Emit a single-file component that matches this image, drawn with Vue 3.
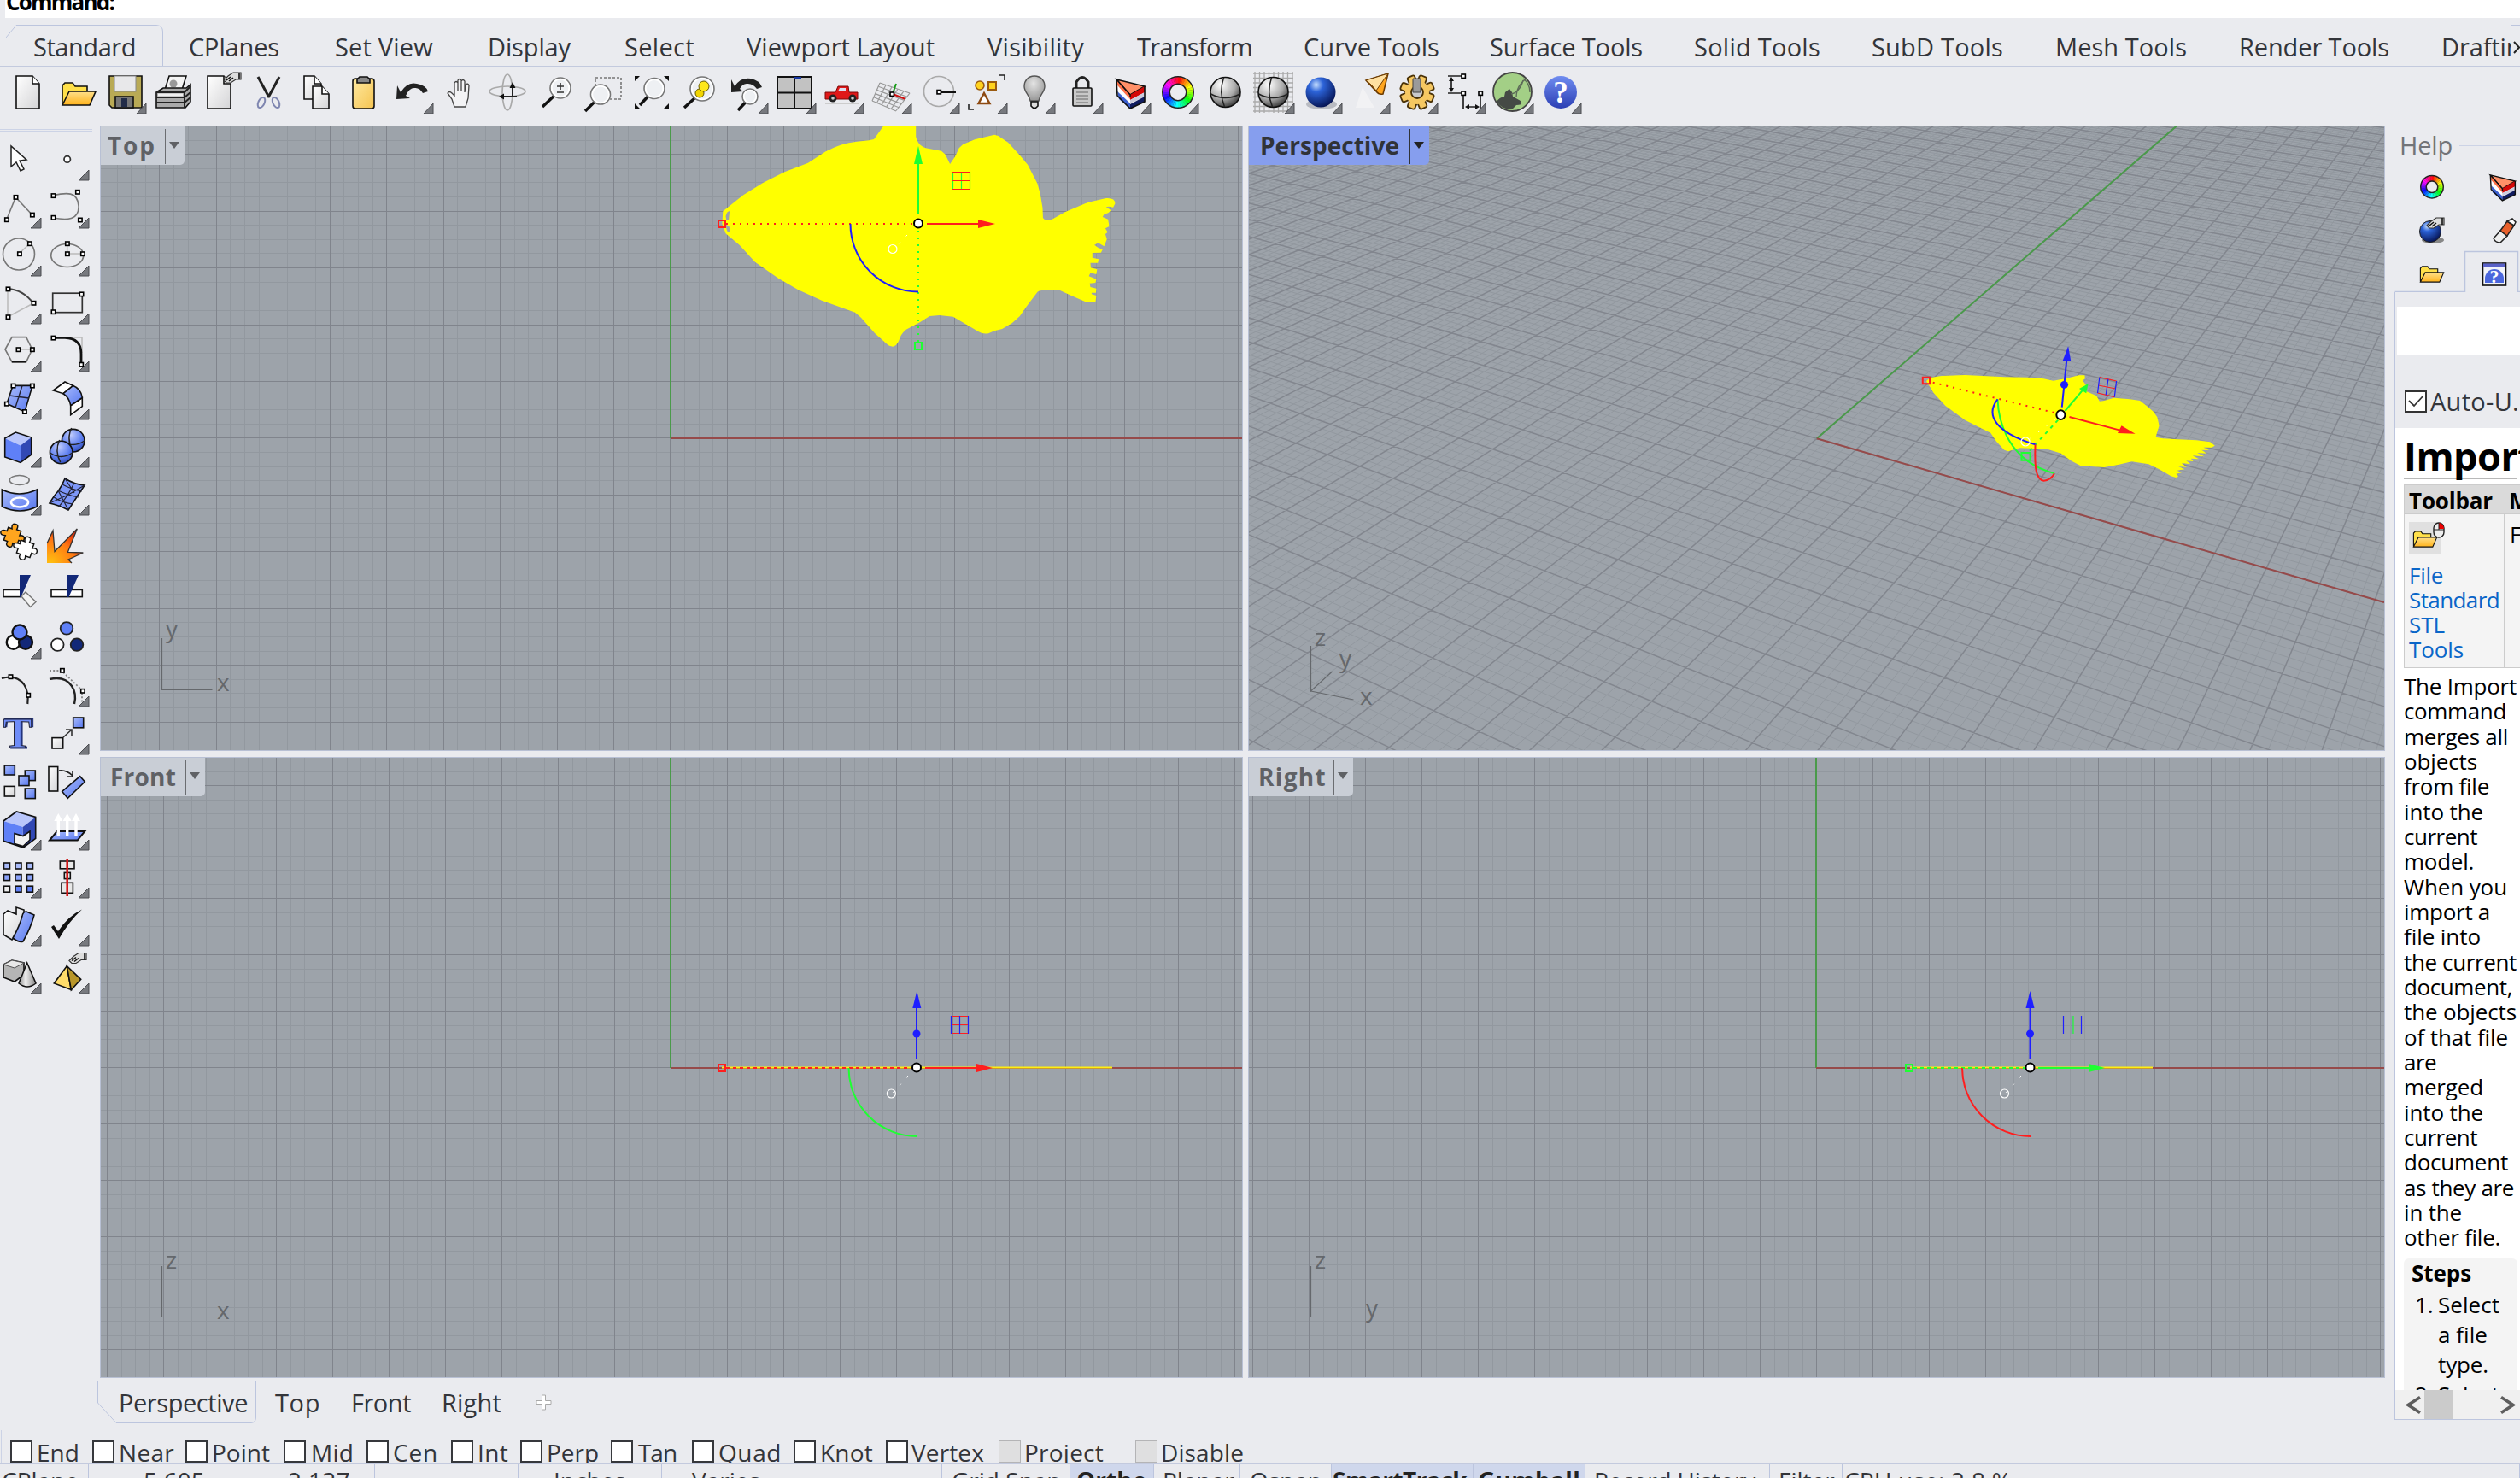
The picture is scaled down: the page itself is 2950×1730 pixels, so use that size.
<script setup>
// Sets tracking so a label occupies the given width in pixels.
const vFit = {
  mounted(el, { value }) {
    if (!value) return
    const w = el.getBoundingClientRect().width
    el.style.letterSpacing = (value + 3 - w) / [...el.textContent].length + 'px'
  },
}

const K = 'stroke="#111" stroke-width="1.6"'
const sq = (x, y) => `<rect x="${x - 2}" y="${y - 2}" width="4.4" height="4.4" fill="#fff" stroke="#000" stroke-width="1.6"/>`
const box = (x, y, w, h, f = 'url(#blu)') => `<rect x="${x}" y="${y}" width="${w}" height="${h}" fill="${f}" ${K}/>`
const ring = (cx, cy, r, sw) => {
  let s = `<circle cx="${cx}" cy="${cy}" r="${r}" fill="none" stroke="#222" stroke-width="${sw + 3}"/>`
  for (let i = 0; i < 36; i++) {
    const a = (i * 10 * Math.PI) / 180
    const b = ((i * 10 + 11) * Math.PI) / 180
    s += `<path d="M${cx + r * Math.sin(a)} ${cy - r * Math.cos(a)}A${r} ${r} 0 0 1 ${cx + r * Math.sin(b)} ${cy - r * Math.cos(b)}" fill="none" stroke="hsl(${i * 10} 100% 52%)" stroke-width="${sw}"/>`
  }
  return s
}
const lens = (x, y, r, hx, hy) =>
  `<path d="M${x - r * 0.6} ${y + r * 0.75}L${hx} ${hy}" stroke="#111" stroke-width="3.4"/><circle cx="${x}" cy="${y}" r="${r}" fill="#eef0f3" stroke="#777" stroke-width="1.6"/><circle cx="${x}" cy="${y}" r="${r - 1.8}" fill="none" stroke="#fff" stroke-width="1.6"/>`
const hand = (x, y) =>
  `<path d="M${x} ${y + 9}l5-5 6-4h9v8h-6l-6 4h-5z" fill="#ddd" stroke="#333" stroke-width="1.2"/><path d="M${x + 18} ${y}v8M${x + 3} ${y + 9}l5-4M${x + 6} ${y + 10}l5-4" stroke="#111" stroke-width="1.6"/>`
const page = (x, y, w, h) =>
  `<path d="M${x} ${y}h${w - 8}l8 9v${h - 9}h${-w}z" fill="url(#wht)" ${K}/><path d="M${x + w - 8} ${y}v9h8" fill="#fff" ${K}/>`
const folder = `<path d="M12 42V20l3-3h9l3 4h14v6" fill="#ffe04a" ${K}/><path d="M12 43l8-16h31l-7 16z" fill="url(#gld)" ${K}/>`
const wedge = `<path d="M14 13l33 8-17 10z" fill="#ff9068" ${K}/><path d="M14 13l16 18v5L15 20z" fill="#ff7048"/><path d="M47 21L30 31v6l17-9z" fill="#d40808"/><path d="M15 20l15 17v4L15 26z" fill="#fff"/><path d="M47 28L30 37v4l17-8z" fill="#ccd"/><path d="M15 27l15 14v6L17 36z" fill="#3a5fd0"/><path d="M47 33L30 42v5l17-8z" fill="#101c60"/><path d="M14 13l1 19 15 15 17-8V21M14 13l16 18v3" fill="none" ${K}/>`
const ballLines = (x, y, r) => `<path d="M${x - r} ${y + 2}Q${x} ${y + 11} ${x + r} ${y + 2}M${x - 2} ${y - r}Q${x - 8} ${y} ${x - 1} ${y + r}" fill="none" stroke="#222" stroke-width="1.5"/>`
const sphere = `<circle cx="29.500" cy="28" r="17.500" fill="url(#gry)" ${K}/>` + ballLines(29.5, 28, 17)
const gear = () => {
  let s = ''
  for (let i = 0; i < 8; i++) s += `<rect x="25.500" y="8" width="9" height="12" rx="2" fill="#f6c862" stroke="#4a3208" stroke-width="1.8" transform="rotate(${i * 45 + 22} 30 28)"/>`
  return s + `<circle cx="30" cy="28" r="14" fill="#f6c862"/><circle cx="30" cy="28" r="7" fill="#c9c9cb" stroke="#4a3208" stroke-width="1.8"/><path d="M25 12h9v16h-9z" fill="#9a9a9a" stroke="#444"/>`
}
const fineGrid = () => {
  let s = ''
  for (let i = 0; i < 9; i++) s += `<path d="M${8 + i * 5.5} 4v48M6 ${6 + i * 5.5}h47" stroke="#aaa" stroke-width="1.3"/>`
  return s
}
const tiltGrid = () => {
  let s = ''
  for (let i = 0; i <= 5; i++) s += `<path d="M${17 + i * 7} ${17 + i * 2.4}L${8 + i * 5.6} ${38 + i * 2.3}M${17 - i * 1.8} ${17 + i * 4.2}L${52 - i * 3.2} ${29 + i * 4.2}" stroke="#999" stroke-width="1.2"/>`
  return s
}

const topIcons = [
  [page(14, 9, 27, 38)],
  [folder],
  [`<path d="M11 9h38v37H14l-3-3z" fill="#b9aa55" ${K}/><rect x="17" y="9" width="25" height="18" fill="#e8e8ea" stroke="#888"/><rect x="18" y="33" width="21" height="13" fill="#777" ${K}/><rect x="25" y="35" width="7" height="10" fill="#222c48"/>`, 1],
  [`<path d="M20 25l5-16h20l-5 16z" fill="#f4f4f4" ${K}/><circle cx="30" cy="18" r="4.500" fill="#999"/><path d="M10 28l8-5h27l5-4v20l-6 7H10z" fill="#aaa" ${K}/><path d="M10 28h33l7-7M10 34h33l7-6M10 40h33l7-6M43 28v18" fill="none" stroke="#222" stroke-width="2"/><path d="M12 31h29" stroke="#eee" stroke-width="3"/>`],
  [page(14, 9, 27, 38) + hand(33, 5)],
  [`<path d="M17 10l13 24M42 10L29 34" stroke="#222" stroke-width="3"/><ellipse cx="21" cy="40" rx="3.600" ry="6.500" fill="none" stroke="#7f86b0" stroke-width="2" transform="rotate(25 21 40)"/><ellipse cx="38" cy="40" rx="3.600" ry="6.500" fill="none" stroke="#7f86b0" stroke-width="2" transform="rotate(-25 38 40)"/>`],
  [page(15, 9, 20, 27) + page(25, 21, 19, 26)],
  [`<rect x="16" y="12" width="25" height="35" rx="3" fill="url(#pst)" ${K}/><path d="M21 17v-4l3-3h9l3 3v4z" fill="#888" ${K}/>`],
  [`<path d="M16 28Q24 15 35 18Q46 20 48 27L42 29Q38 22 32 23Q26 23 22 32l5 3L11 36l1-16z" fill="#222"/>`, 1],
  [`<path d="M23 45l-3-9-5-7q2-3 5 0l3 3V17q2-3 4 0v10V14q2-3 4 0v13V15q2-3 4 0v13l1-9q3-2 4 1l-1 15-3 10z" fill="#f3f3f5" stroke="#444" stroke-width="1.3"/>`],
  [`<ellipse cx="29" cy="28" rx="6" ry="21" fill="none" stroke="#aaa" stroke-width="1.700"/><ellipse cx="29" cy="27" rx="21" ry="6" fill="none" stroke="#aaa" stroke-width="1.700"/><path d="M35 20v12M22 33h18" stroke="#222" stroke-width="2"/><path d="M35 16l3.500 7h-7zM19 33l6-3.500v7z" fill="#111"/>`],
  [lens(35, 23, 12, 14, 45) + `<path d="M31 21h8M35 17v8M31 28h8" stroke="#333" stroke-width="1.6"/>`],
  [`<rect x="20" y="11" width="30" height="25" fill="none" stroke="#777" stroke-width="1.600" stroke-dasharray="3 2"/>` + lens(26, 30.5, 11.5, 8, 50)],
  [lens(33, 23.5, 12, 16, 43) + `<path d="M10 9h6l-6 6zM50 9v6l-6-6zM10 47v-6l6 6zM50 47h-6l6-6z" fill="#111"/>`],
  [lens(33, 24, 14, 12, 46) + `<circle cx="30" cy="29" r="5" fill="#f2d500" stroke="#665a00"/><circle cx="35" cy="21" r="6" fill="#ffe81a" stroke="#665a00"/>`],
  [lens(33, 33, 9, 19, 49) + `<path d="M15 21Q22 10 34 12Q44 14 47 22l-6 2Q36 17 29 18Q24 18 21 24l4 3-14 1 0-15z" fill="#222"/>`, 1],
  [`<path d="M9 10h40v37H9zM29 10v37M9 28.500h40" fill="#c2c2c2" stroke="#111" stroke-width="2"/><path d="M29 11h8" stroke="#1838a0" stroke-width="2"/>`, 1],
  [`<path d="M9 41h40" stroke="#ccc" stroke-width="2"/><path d="M9 36v-8h12l3-7h12l1 7h10v8z" fill="#e01818" stroke="#7a0808"/><path d="M24 27l2-4h7v4z" fill="#dde"/><circle cx="18" cy="35" r="4.500" fill="#222"/><circle cx="41" cy="35" r="4.500" fill="#222"/><circle cx="18" cy="35" r="1.800" fill="#ccc"/><circle cx="41" cy="35" r="1.800" fill="#ccc"/>`, 1],
  [tiltGrid() + `<path d="M32 30l4-12" stroke="#1a9c1a" stroke-width="2"/><path d="M32 30l15 6" stroke="#d01010" stroke-width="2"/>` + sq(31, 30), 1],
  [`<circle cx="30" cy="27" r="17.500" fill="none" stroke="#aaa" stroke-width="1.600"/><path d="M31 28h19" stroke="#111" stroke-width="2"/>` + sq(30, 27.5), 1],
  [`<circle cx="22" cy="20" r="5" fill="#ffd21e" stroke="#9a5b10" stroke-width="1.6"/><rect x="32" y="16" width="9" height="9" fill="#ffd21e" stroke="#9a5b10" stroke-width="2"/><path d="M27 29l6.500 12h-13z" fill="#fff" stroke="#8d4a12" stroke-width="2.4"/><path d="M44 8h7v6M9 42v6h6" fill="none" stroke="#222" stroke-width="1.6"/>`, 1],
  [`<path d="M30 9c8 0 12 6 12 12 0 7-6 10-7 17h-10c-1-7-7-10-7-17 0-6 4-12 12-12z" fill="url(#gry2)" stroke="#555" stroke-width="1.4"/><path d="M26 39h8v5q-4 5-8 0z" fill="#ddd" ${K}/>`, 1],
  [`<path d="M23 23v-7q7-11 14 0v7" fill="none" stroke="#222" stroke-width="3"/><rect x="19" y="23" width="22" height="21" rx="1" fill="#c8c8c8" ${K}/><path d="M23 28h14M23 32h14M23 36h14M23 40h14" stroke="#888" stroke-width="1.5"/>`, 1],
  [wedge, 1],
  [ring(30, 28, 14, 7), 1],
  [sphere],
  [fineGrid() + sphere, 1],
  [`<ellipse cx="30" cy="42" rx="18" ry="6" fill="#b9bbc2"/><circle cx="29" cy="28" r="17.500" fill="url(#bal)"/>`, 1],
  [`<path d="M22 22l-8 24h22z" fill="#f2f2f4"/><path d="M26 14l26-8-6 24q-5 1-8-3z" fill="#ffa51e" stroke="#6b3a00" stroke-width="1.5"/><path d="M26 14l26-8-14 20q-6-8-12-12z" fill="#ffe0a0" stroke="#6b3a00" stroke-width="1"/>`, 1],
  [gear(), 1],
  [`<path d="M10 9h18M10 29h18M14 13v12M28 30v18M48 30v18M32 45h12" stroke="#222" stroke-width="1.7"/><path d="M14 10l3 5h-6zM14 28l3-5h-6zM30 45l5-3v6zM47 45l-5-3v6z" fill="#111"/>` + sq(28, 9) + sq(28, 29) + sq(48, 29), 1],
  [`<circle cx="29.500" cy="27.500" r="22.500" fill="#a3cf86" stroke="#444" stroke-width="1.800"/><path d="M11 39q3-5 9-6l1-5 5-4 3 4 1 5 9 5q4 5-5 5l-5 5q-12 0-18-9z" fill="#454a45"/><path d="M34 34q0-14 12-22M28 30q10-2 14-16M42 12q8 6 8 16" fill="none" stroke="#5c6a58" stroke-width="1.400"/>`, 1],
  [`<circle cx="30" cy="28" r="19" fill="url(#hlp)"/><text x="30" y="40" text-anchor="middle" font-family="Liberation Serif, serif" font-weight="700" font-size="35" fill="#fff">?</text>`, 1],
]

const gray = 'fill="none" stroke="#777" stroke-width="1.6"'
let dots = ''
for (let j = 0; j < 3; j++) for (let i = 0; i < 3; i++) dots += box(10.5 + i * 13.5, 12 + j * 13.6, 7, 7, j === 2 && i === 0 ? '#eee' : ['#a9bbfb', '#8aa2fa', '#5f80f7'][j])
const puzzle = (x, y, f) => `<path transform="translate(${x} ${y}) rotate(20) scale(.92)" d="M-9-8h5q-3-6 2-7t4 6h6v6q6-3 7 2t-6 4v6h-6q2 6-3 6t-4-6h-5v-6q-6 2-7-2t7-4z" fill="${f}" ${K}/>`
const leftIcons = [
  [`<path d="M19 13v24l6-5 5 10 4-2-5-10 8-1z" fill="#fff" stroke="#222" stroke-width="1.5"/>`],
  [`<circle cx="28.700" cy="28.400" r="3.700" fill="#fff" stroke="#333" stroke-width="1.800"/>`, 1],
  [`<path d="M13.700 43L24.300 17l19.400 20.500" ${gray}/>` + sq(13.7, 43) + sq(24.3, 16.7) + sq(43.7, 37.4), 1],
  [`<path d="M12 15C28 11 41 10 42 27S28 44 12 41" ${gray}/>` + sq(12.3, 14.9) + sq(40.7, 10.6) + sq(43.7, 43.3) + sq(12.3, 40.6), 1],
  [`<circle cx="28" cy="27.500" r="18.500" ${gray}/><path d="M28 27l13-12" stroke="#bbb" stroke-width="1.500"/>` + sq(28.7, 27) + sq(40.7, 15), 1],
  [`<ellipse cx="28.700" cy="29" rx="19" ry="13.500" ${gray}/><path d="M28.700 15v12h18" fill="none" stroke="#bbb" stroke-width="1.500"/>` + sq(28.7, 15) + sq(28.7, 27) + sq(46.7, 27), 1],
  [`<path d="M15 12v33l30-16" fill="none" stroke="#bbb" stroke-width="1.500"/><path d="M15 12q18 1 30 17" fill="none" stroke="#444" stroke-width="1.800"/>` + sq(15.3, 12.2) + sq(45.3, 28.6) + sq(15.3, 45), 1],
  [`<rect x="11.700" y="17.200" width="34.600" height="22.500" fill="none" stroke="#333" stroke-width="1.700"/>` + sq(45.3, 18.2) + sq(12.3, 39), 1],
  [`<path d="M12 27l8-14.400h16.700L43.700 27l-7 14.600H20z" ${gray}/><path d="M20 41.600h16.700" stroke="#111" stroke-width="1.800"/><path d="M27 27h16" stroke="#bbb" stroke-width="1.500"/>` + sq(27.3, 27) + sq(43.7, 27), 1],
  [`<path d="M28 13h18v18" fill="none" stroke="#bbb" stroke-width="1.500"/><path d="M12 13.400h14Q45 14 45 32v12" fill="none" stroke="#111" stroke-width="2.800"/>` + sq(12.3, 13.4) + sq(45, 44.5), 1],
  [`<path d="M21 13.400h23L35 44l-21-9.500z" fill="url(#blu)" ${K}/><path d="M32 13.500L24 39M17 25l23 3" fill="none" stroke="#223" stroke-width="1.400"/>` + sq(21.3, 13.4) + sq(43.7, 13.4) + sq(34.7, 43.8) + sq(13.7, 34.5), 1],
  [`<path d="M12.300 19L26 9l9.700 4.400L24 22.700zM46.300 27.700v10l-13.600 10V36.600z" fill="#fff" ${K}/><path d="M35.700 13.400Q45 17 46.300 27.500L32.700 36.600Q31 27 24 22.700z" fill="url(#blu)" ${K}/>`, 1],
  [`<path d="M11.700 19l12.600-7 18.400 6L30 27.400z" fill="#b9c6fb"/><path d="M11.700 19L30 27.400v20L11.700 41z" fill="#5f80f7"/><path d="M30 27.400L42.700 18v20L30 47.400z" fill="#3148b4"/><path d="M11.700 19l12.600-7 18.400 6v20L30 47.400 11.700 41z" fill="none" ${K}/>`, 1],
  [`<circle cx="35.700" cy="21.700" r="13.300" fill="url(#sph)" ${K}/>${ballLines(35.7, 20, 13)}<circle cx="21.700" cy="35.500" r="13.300" fill="url(#sph)" ${K}/>${ballLines(21.7, 34, 13)}`, 1],
  [`<ellipse cx="28.700" cy="12" rx="11.500" ry="5.500" ${gray}/><path d="M8.300 23q20 10 41 0v20q-20 10-41 0z" fill="url(#blu)" ${K}/><ellipse cx="29" cy="38" rx="10" ry="5.500" fill="none" stroke="#fff" stroke-width="2.600"/>`, 1],
  [`<path d="M26 10q11 7 23 8-8 12-19 29-12-6-22-8 6-10 10-14 5-7 8-15z" fill="#7d97f8" ${K}/><path d="M37 15Q30 30 19 43M42 32Q30 30 18 24M46 25q-12-2-23-8M36 40q-12-1-23-8M26 10l11 17M49 18L30 29 8 39M18 24l12 23" fill="none" stroke="#223" stroke-width="1.200"/>`, 1],
  [puzzle(21, 21, '#ffa51e') + puzzle(36, 36, '#fff')],
  [`<path d="M5 30l7-15 2 24.500L40.300 13 29.300 40.400l18 .6L30 49l4 4H5z" fill="url(#exp)"/><path d="M5 30l7-15 2 24.500L40.300 13 29.300 40.400l18 .6L30 49l4 4" fill="none" stroke="#333" stroke-width="1.300"/>`],
  [`<rect x="10" y="28.400" width="20" height="8.200" fill="#fff" ${K}/><path d="M29 11h13L30.500 37H29z" fill="#122878"/><path d="M31 36l5-5 12 11.500-6.500 6z" fill="#f4f4f4" stroke="#777" stroke-width="1.400"/>`],
  [`<rect x="10" y="28.400" width="36.300" height="8.200" fill="#fff" ${K}/><path d="M29 11h13L30.500 37H29z" fill="#122878"/>`],
  [`<g stroke="#111" stroke-width="2.400"><circle cx="21.700" cy="33.800" r="8" fill="#fff"/><circle cx="36" cy="33.800" r="8" fill="#122878"/><circle cx="29" cy="22" r="8.500" fill="#5f80f7"/></g>`, 1],
  [`<g stroke="#222" stroke-width="1.800"><circle cx="28" cy="17.400" r="7.300" fill="#5f80f7"/><circle cx="17.300" cy="36.600" r="7.300" fill="#fff"/><circle cx="40" cy="36.600" r="7.300" fill="#122878"/></g>`],
  [`<path d="M8 20Q25 15 34 27 40 36 38.300 50" fill="none" stroke="#222" stroke-width="2.200"/>` + sq(18.3, 18) + sq(39, 39.6)],
  [`<path d="M8 21Q26 17 34 29 40 38 37 50" fill="none" stroke="#222" stroke-width="2.400"/><path d="M8 11h14l24 23v16" fill="none" stroke="#888" stroke-width="1.800" stroke-dasharray="2 2.200"/>` + sq(22.7, 10.6) + sq(46.7, 34.6), 1],
  [`<text x="28" y="46" text-anchor="middle" font-family="Liberation Serif, serif" font-weight="700" font-size="52" fill="#24347c" stroke="#24347c">T</text><text x="26.500" y="45" text-anchor="middle" font-family="Liberation Serif, serif" font-weight="700" font-size="51" fill="#6e8cf8" stroke="#223" stroke-width="1">T</text>`],
  [box(11, 33.6, 12.7, 12.4, 'url(#wht)') + box(35.7, 10, 12, 11.8) + `<path d="M24 33l10-9M27 24h7v7" fill="none" stroke="#333" stroke-width="1.600"/>`, 1],
  [box(11.3, 10, 12, 11) + box(35.3, 16, 12, 11.6) + box(28, 22, 12, 11.6) + box(11.3, 34.4, 12, 11.6, 'url(#wht)') + box(35.3, 37, 12, 11.6)],
  [box(7, 11.5, 10.7, 28.5, 'url(#wht)') + `<path d="M19 16q9-1 16 6M35 16v7h-7" fill="none" stroke="#222" stroke-width="1.600"/><path d="M22.700 40.400l21-17.800 5.600 6.400-20 19.300z" fill="url(#blu)" ${K}/>`],
  [`<path d="M10 19L25.300 8l22.400 6.400-15 11.600z" fill="#b9c6fb"/><path d="M10 19l22.700 7v24L10 42.300z" fill="#5f80f7"/><path d="M32.700 26l15-11.600v25L33 50z" fill="#3148b4"/><path d="M10 19L25.300 8l22.400 6.400v25L33.300 50 10 42.300z" fill="none" ${K}/><path d="M23 33.500l10 3 8-5.500v10l-8 7.500-10-3z" fill="#f2f2f2" ${K}/>`, 1],
  [`<path d="M16.700 31h32.600l-8.600 10.600H8z" fill="url(#blu)" stroke="#111" stroke-width="2"/><path d="M18.300 17v20M28.700 17v20M39 17v20" stroke="#fff" stroke-width="3.400"/><path d="M18.300 10l5 9h-10zM28.700 10l5 9h-10zM39 10l5 9H34z" fill="#fff"/>`, 1],
  [dots, 1],
  [box(20.3, 10, 16.7, 8.8, '#e8e8e8') + box(25.3, 23.4, 7, 7.2, '#e8e8e8') + box(22, 35.3, 13.4, 12, '#e8e8e8') + `<path d="M28.700 7v44" stroke="#d01818" stroke-width="2.600"/>`, 1],
  [`<path d="M10 16l5-4 10 4v-8l9 3v20L20 46l-10-6z" fill="url(#wht)" ${K}/><path d="M32 18q1-5 5-5l9 4q-4 15-13 31-4 2-12-4 8-14 11-26z" fill="url(#blu)" ${K}/>`, 1],
  [`<path d="M10 31l3-2 5 7Q30 18 46 10.500 31 24 19 45z" fill="#111"/>`, 1],
  [`<path d="M10 19l10-5 14 3v14l-11 8-13-5z" fill="#b5b5b5" ${K}/><path d="M10 19l10-5 14 3-11 6z" fill="#e8e8e8" stroke="#555"/><path d="M37.700 17L48 41q-10 8-20 0z" fill="url(#cne)" ${K}/>`, 1],
  [`<path d="M28.300 20.700l-15 20.300 20 7.600z" fill="#ffdc6a" ${K}/><path d="M28.300 20.700l5 28L44.700 36.400z" fill="#b8962a" ${K}/>` + hand(31, 5.5), 1],
]

const tabs = [
  ['Standard', 40, 117], ['CPlanes', 222, 103], ['Set View', 393, 112], ['Display', 572, 94],
  ['Select', 732, 79], ['Viewport Layout', 875, 217], ['Visibility', 1157, 110], ['Transform', 1332, 132],
  ['Curve Tools', 1527, 156], ['Surface Tools', 1745, 176], ['Solid Tools', 1984, 145], ['SubD Tools', 2192, 151],
  ['Mesh Tools', 2407, 151], ['Render Tools', 2622, 173], ['Drafting', 2859, 106],
].map((t, i, a) => ({ label: t[0], w: t[2], cell: (a[i + 1]?.[1] ?? 2948) - t[1] }))

const snaps = [
  ['End', 12, 44, 47], ['Near', 108, 140, 62], ['Point', 217, 249, 65], ['Mid', 332, 365, 47], ['Cen', 429, 461, 50],
  ['Int', 528, 560, 33], ['Perp', 609, 641, 58], ['Tan', 715, 748, 42], ['Quad', 810, 842, 71], ['Knot', 929, 961, 59],
  ['Vertex', 1037, 1068, 82], ['Project', 1169, 1200, 90], ['Disable', 1329, 1360, 94],
].map((t, i, a) => ({ label: t[0], cell: (a[i + 1]?.[1] ?? 1500) - t[1], gap: t[2] - t[1] - 27, w: t[3], off: i > 10 }))

const status = [
  ['CPlane', 0, 104, 4], ['5.605', 104, 271, 66, 0, 69], ['2.137', 271, 439, 68, 0, 70], ['', 439, 607, 10], ['Inches', 607, 775, 43],
  ['Varies', 775, 1103, 37], ['Grid Snap', 1103, 1253, 13], ['Ortho', 1253, 1351, 9, 1, 80], ['Planar', 1351, 1452, 12],
  ['Osnap', 1452, 1559, 13], ['SmartTrack', 1559, 1725, 3, 1, 154], ['Gumball', 1725, 1856, 7, 1, 117], ['Record History', 1856, 2072, 12, 0, 186],
  ['Filter', 2072, 2157, 12], ['CPU use: 2.8 %', 2157, 2950, 4, 0, 193],
].map((t) => ({ label: t[0], w: t[2] - t[1], pad: t[3], on: t[4], fit: t[5] }))

// Ground-plane projection for the perspective pane.
const D = 900, G = 0.01445, H = 0.025085
const project = (u, v) => {
  const w = 1 - G * u + H * v
  return [2126.8 + (D * (3.4614 * G * u + 1.1521 * H * v)) / w, 513.3 - D + D / w]
}
const seg = (u1, v1, u2, v2) => {
  const a = project(u1, v1), b = project(u2, v2)
  return `M${a[0].toFixed(1)} ${a[1].toFixed(1)}L${b[0].toFixed(1)} ${b[1].toFixed(1)}`
}
let persMinor = '', persMajor = ''
for (let i = -36 * 4; i <= 36 * 4; i++) {
  const k = i / 4
  let s = ''
  if (k <= 16) s += seg(k, Math.max(-16, (0.2 - 1 + G * k) / H), k, 38)
  if (k >= -15) s += seg(-36, k, Math.min(18, (0.8 + H * k) / G), k)
  if (i % 4 === 0) persMajor += s
  else persMinor += s
}
const flat = (ox, oy, p, x0, x1, y0, y1) => {
  let minor = '', major = ''
  for (let i = Math.ceil((x0 - ox) / p); ox + i * p < x1; i++) {
    const s = `M${Math.round(ox + i * p) + 0.5} ${y0}V${y1}`
    i % 4 ? (minor += s) : (major += s)
  }
  for (let i = Math.ceil((y0 - oy) / p); oy + i * p < y1; i++) {
    const s = `M${x0} ${Math.round(oy + i * p) + 0.5}H${x1}`
    i % 4 ? (minor += s) : (major += s)
  }
  return { minor, major }
}
const gTop = flat(784.4, 512.4, 16.61, 117, 1455, 147, 879)
const gFront = flat(785, 1249.4, 16.5, 117, 1455, 886, 1613)
const gRight = flat(2126, 1249.4, 16.5, 1461, 2792, 886, 1613)

const helpLines = ['The Import', 'command', 'merges all', 'objects', 'from file', 'into the', 'current', 'model.', 'When you', 'import a', 'file into', 'the current', 'document,', 'the objects', 'of that file', 'are', 'merged', 'into the', 'current', 'document', 'as they are', 'in the', 'other file.']
const helpWidths = [129, 117, 119, 83, 97, 90, 83, 79, 118, 98, 87, 129, 124, 129, 119, 35, 90, 90, 83, 119, 126, 65, 110]
</script>

<template>
  <div class="app">
    <svg class="defs" width="0" height="0">
      <defs>
        <linearGradient id="blu" x1="0" y1="0" x2="1" y2="1"><stop offset="0" stop-color="#a9bcfc" /><stop offset="1" stop-color="#5777ee" /></linearGradient>
        <linearGradient id="wht" x1="0" y1="0" x2="1" y2="1"><stop offset="0" stop-color="#fff" /><stop offset="1" stop-color="#d4d4d6" /></linearGradient>
        <linearGradient id="gld" x1="0" y1="0" x2="0" y2="1"><stop offset="0" stop-color="#ffe08a" /><stop offset="1" stop-color="#ffb31c" /></linearGradient>
        <linearGradient id="pst" x1="0" y1="0" x2="1" y2="1"><stop offset="0" stop-color="#ffe9a0" /><stop offset="1" stop-color="#f5c451" /></linearGradient>
        <linearGradient id="cne" x1="0" y1="0" x2="1" y2="0"><stop offset="0" stop-color="#8a8a8a" /><stop offset=".4" stop-color="#eee" /><stop offset="1" stop-color="#888" /></linearGradient>
        <linearGradient id="hlp" x1="0" y1="0" x2="0" y2="1"><stop offset="0" stop-color="#6f8cf0" /><stop offset="1" stop-color="#2c3fb4" /></linearGradient>
        <radialGradient id="gry" cx=".35" cy=".25" r=".8"><stop offset="0" stop-color="#fff" /><stop offset=".6" stop-color="#aaa" /><stop offset="1" stop-color="#333" /></radialGradient>
        <radialGradient id="gry2" cx=".45" cy=".3" r=".8"><stop offset="0" stop-color="#e4e4e4" /><stop offset="1" stop-color="#8c8c8c" /></radialGradient>
        <radialGradient id="bal" cx=".35" cy=".25" r=".8"><stop offset="0" stop-color="#c8e0ff" /><stop offset=".3" stop-color="#2c63d8" /><stop offset="1" stop-color="#04104e" /></radialGradient>
        <radialGradient id="sph" cx=".4" cy=".25" r=".8"><stop offset="0" stop-color="#c0ccfc" /><stop offset=".6" stop-color="#5f80f0" /><stop offset="1" stop-color="#2d48b4" /></radialGradient>
        <radialGradient id="exp" cx=".1" cy="1" r="1.1"><stop offset="0" stop-color="#ffc010" /><stop offset=".6" stop-color="#ff7a14" /><stop offset="1" stop-color="#e02a08" /></radialGradient>
      </defs>
    </svg>

    <div class="command"><b v-fit="123">Command:</b></div>
    <nav class="tabs">
      <svg class="tab-edge" width="184" height="50"><path d="M0 15L12 .5H176Q183.500 1 183.500 8V50" fill="none" stroke="#bcc5de" /></svg>
      <div v-for="t in tabs" :key="t.label" class="tab" :style="{ width: t.cell + 'px' }"><span v-fit="t.w">{{ t.label }}</span></div>
      <div class="more"><svg width="10" height="48"><path d="M3 19l6 6.500-6 6.500" fill="none" stroke="#222" stroke-width="2" /></svg></div>
    </nav>
    <div class="toolbar">
      <svg v-for="(ic, i) in topIcons" :key="i" width="56" height="60" viewBox="0 0 56 60">
        <g v-html="ic[0]"></g>
        <path v-if="ic[1]" class="flyout" d="M54 41v12H43z" />
      </svg>
    </div>

    <main class="main">
      <div class="left">
        <div class="work">
          <aside class="tools">
            <i class="grip"></i>
            <div class="tool-grid">
              <svg v-for="(ic, i) in leftIcons" :key="i" width="56" height="56" viewBox="0 0 56 56">
                <g v-html="ic[0]"></g>
                <path v-if="ic[1]" class="flyout" d="M54 41v12H42z" />
              </svg>
            </div>
          </aside>

          <section class="views">
            <div class="view">
              <svg viewBox="117 147 1338 732" width="1338" height="732">
                <path class="minor" :d="gTop.minor" /><path class="major" :d="gTop.major" />
                <path class="ax-g" d="M785 147V513" /><path class="ax-r" d="M785 513H1455" />
                <g transform="translate(760 140) scale(.4591 .3333)">
                  <path fill="#ff0" d="M188 322L240 265 290 222 345 184 405 152 450 112C480 90 500 82 530 77L560 73 573 69 598 21H680V60C684 80 690 92 705 100L745 110 755 122 767 156 780 130 790 100 800 87 830 70 880 53 890 57 915 80 945 125 965 158 990 225 997 260 1003 310 1004 345Q1010 358 1025 352L1060 325 1120 290 1165 276Q1188 274 1188 295L1183 308 1172 305 1165 307 1177 318Q1172 330 1160 332L1156 342 1170 350 1173 375 1163 382 1169 395 1163 402 1167 420 1160 445 1145 433 1135 440 1145 450 1156 456 1152 467 1130 468 1130 485 1146 490 1144 503 1125 503 1126 520 1142 526 1140 543 1125 538 1121 550 1140 560 1138 573 1123 575 1125 588 1140 593 1139 608 1128 608 1128 613 1140 618 1138 640Q1125 645 1110 638L1075 617 1043 597 1010 598Q995 600 990 605L960 660 945 690 925 715 900 735 880 742 865 751Q850 754 840 745L775 692 740 687 715 690 690 712 655 737Q640 755 637 775 630 797 621 797 612 797 605 787L575 750 540 695 525 677 440 635 380 598 330 558 270 500 230 440 195 400 186 365Z" />
                  <path fill="#9da3aa" d="M205 322Q198 320 195 340L197 355 203 350ZM196 368L204 376 206 390 202 396Q196 390 196 368Z" />
                </g>
                <path class="dot r" d="M850 262H1069" /><path class="dot g" d="M1075 270V400" />
                <path class="ln g" d="M1075 251V190" /><path fill="#1eff32" d="M1075 171l5 21h-10z" />
                <path class="ln r" d="M1085 262h62" /><path fill="#ff1e1e" d="M1165 262l-20-5v10z" />
                <path class="ln b" d="M995.500 262A79.500 79.500 0 0 0 1075 341.500" />
                <rect class="hd r" x="841" y="258" width="8" height="8" /><rect class="hd g" x="1071" y="401" width="8" height="8" />
                <path class="wd" d="M1062 275L1048 290" /><circle class="wc" cx="1045" cy="291.500" r="5" />
                <path class="pl g" d="M1115.500 201v20M1125.500 201v20M1135.500 201v20" /><path class="pl r" d="M1115 201.500h21M1115 211.500h21M1115 221.500h21" />
                <circle class="ctr" cx="1075" cy="261.500" r="5" />
                <path class="ucs" d="M189.500 747v60.500h59" /><text x="194" y="746">y</text><text x="254" y="809">x</text>
              </svg>
              <div class="badge"><b v-fit="54">Top</b><i></i></div>
            </div>

            <div class="view">
              <svg viewBox="1461 147 1331 732" width="1331" height="732">
                <path class="minor thin" :d="persMinor" /><path class="major pm" :d="persMajor" />
                <path class="ax-g" d="M2126.800 513.300L2548.500 147" /><path class="ax-r" d="M2126.800 513.300L2791 705" />
                <g transform="translate(2080 380) scale(.4591 .3333)">
                  <path fill="#ff0" d="M381 198L392 186 420 180 480 177 580 184 640 185 680 190 705 197 740 188 770 178 785 178 786 190 780 196 788 212 790 235 815 250 823 269 832 268 860 257 900 262 926 267 940 282 960 305 970 325 975 355 966 395 985 400 1070 406 1105 412 1117 425 1108 431 1088 431 1102 441 1083 440 1096 452 1072 450 1090 463 1060 460 1076 472 1056 470 1062 480 1044 478 1055 490 1032 486 1045 500 1024 498 1040 508 1020 512 1032 520 1018 524 1024 532 1018 537 1005 532 975 508 948 490 905 481 870 492 835 501 775 496 750 478 725 452 690 437 620 433 590 445 580 440 560 410 545 380 480 335 430 285 400 240Z" />
                  <g class="nss">
                    <path class="dot r" d="M398 203L715 312" /><path class="dot g dd" d="M717 335L640 450" />
                    <path class="ln r" d="M746 324L875 371" /><path fill="#ff1e1e" d="M914 383L879 355 869 381Z" />
                    <path class="ln b" d="M727 290L739 125" /><path fill="#1e1eff" d="M743 76L750 129 729 127Z" />
                    <path class="ln g" d="M735 303L780 230" /><path fill="#1eff32" d="M794 208L771 225 789 241Z" />
                    <path class="ln g" d="M563 262C565 340 590 480 708 522" />
                    <path class="ln b" d="M563 262C530 320 560 380 659 421" />
                    <path class="ln r" d="M659 421C657 500 660 545 681 548Q697 548 708 523" />
                    <path class="pl r" d="M823 185L866 198M820 213L864 225M818 240L861 254" /><path class="pl b" d="M823 185L818 240M845 191L839 247M866 198L861 254" />
                    <ellipse cx="733" cy="211" rx="10" ry="13" fill="#1e1eff" />
                    <rect class="hd r" x="372" y="185" width="18" height="23" /><rect class="hd g" x="624" y="450" width="22" height="26" />
                    <path class="wd" d="M712 330L645 400" />
                    <ellipse class="wc" cx="634" cy="411" rx="11" ry="15" />
                    <ellipse class="ctr" cx="724" cy="317" rx="11" ry="16" />
                  </g>
                </g>
                <path class="ucs" d="M1534.500 756v53l25-23M1534.500 809l50 10" /><text x="1539" y="756">z</text><text x="1568" y="781">y</text><text x="1592" y="825">x</text>
              </svg>
              <div class="badge hot"><b v-fit="160">Perspective</b><i></i></div>
            </div>

            <div class="view">
              <svg viewBox="117 886 1338 727" width="1338" height="727">
                <path class="minor" :d="gFront.minor" /><path class="major" :d="gFront.major" />
                <path class="ax-g" d="M785 886V1250" /><path class="ax-r" d="M785 1250H1455" />
                <path class="yl" d="M845 1249.500H1302" /><path class="dot r dense" d="M850 1250H1069" />
                <path class="ln b" d="M1073 1240V1180" /><path fill="#1e1eff" d="M1073.300 1160l5 20h-10z" /><circle cx="1073" cy="1210" r="4.500" fill="#1e1eff" />
                <path class="ln r" d="M1083 1250h62" /><path fill="#ff1e1e" d="M1162 1250l-19-5v10z" />
                <path class="ln g" d="M993.500 1250A80 80 0 0 0 1073.500 1330" />
                <rect class="hd r" x="841" y="1246" width="8" height="8" />
                <path class="pl r" d="M1113 1189.500h21M1113 1199.500h21M1113 1209.500h21" /><path class="pl b" d="M1113.500 1189v21M1123.500 1189v21M1133.500 1189v21" />
                <path class="wd" d="M1063 1260L1045 1279" /><circle class="wc" cx="1043.400" cy="1280" r="5" />
                <circle class="ctr" cx="1073" cy="1249.500" r="5" />
                <path class="ucs" d="M189.500 1482v59.500h59" /><text x="194" y="1485">z</text><text x="254" y="1544">x</text>
              </svg>
              <div class="badge wide"><b v-fit="74">Front</b><i></i></div>
            </div>

            <div class="view">
              <svg viewBox="1461 886 1331 727" width="1331" height="727">
                <path class="minor" :d="gRight.minor" /><path class="major" :d="gRight.major" />
                <path class="ax-g" d="M2126 886V1250" /><path class="ax-r" d="M2126 1250H2792" />
                <path class="yl" d="M2236 1249.500H2520" /><path class="dot g dense" d="M2240 1250H2370" />
                <path class="ln b" d="M2376.500 1240V1180" /><path fill="#1e1eff" d="M2376.500 1160l5 20h-10z" /><circle cx="2376.500" cy="1210" r="4.500" fill="#1e1eff" />
                <path class="ln g" d="M2386 1250h60" /><path fill="#1eff32" d="M2464 1250l-19-5v10z" />
                <path class="ln r" d="M2297 1250A80 80 0 0 0 2377 1330" />
                <rect class="hd g" x="2231" y="1246" width="8" height="8" />
                <path class="pl b" d="M2415.500 1189v21M2425.500 1189v21" /><path class="pl g" d="M2427 1189v21" /><path class="pl b" d="M2436.500 1189v21" />
                <path class="wd" d="M2366 1260L2348 1279" /><circle class="wc" cx="2346.500" cy="1280" r="5" />
                <circle class="ctr" cx="2376.500" cy="1249.500" r="5" />
                <path class="ucs" d="M1534.500 1482v59.500h59" /><text x="1539" y="1485">z</text><text x="1599" y="1541">y</text>
              </svg>
              <div class="badge wide"><b v-fit="77">Right</b><i></i></div>
            </div>
          </section>
        </div>
        <div class="vtabs">
          <svg width="188" height="50"><path d="M.5 0V25L22 48.500H180Q185.500 48 185.500 42V0" fill="none" stroke="#bcc5de" /></svg>
          <span v-fit="148" class="v1">Perspective</span><span v-fit="50" class="v2">Top</span><span v-fit="67" class="v3">Front</span><span v-fit="67" class="v4">Right</span>
          <svg class="plus" width="19" height="19"><path d="M7.500 1h4v6.500H18v4h-6.500V18h-4v-6.500H1v-4h6.500z" fill="#fff" stroke="#aaa" /></svg>
        </div>
      </div>

      <aside class="panel">
        <header><span v-fit="59">Help</span><i></i></header>
        <div class="ptabs">
          <svg width="150" height="150" viewBox="2800 192 150 150">
            <path d="M2803.500 341.500H2885.500V294.500H2947.500V341.500H2950" fill="none" stroke="#bcc5de" stroke-width="1.500" />
            <g v-html="ring(2847, 218.7, 10, 5)"></g>
            <g transform="translate(2903 193.500) scale(.88)" v-html="wedge"></g>
            <ellipse cx="2848" cy="281" rx="13" ry="4" fill="#888" /><circle cx="2845" cy="271" r="12.500" fill="url(#bal)" stroke="#222" />
            <g transform="translate(2811 251)" v-html="hand(30, 4)"></g>
            <path d="M2919 279l8-9 8 6-8 8q-6 0-8-5z" fill="#eee" stroke="#222" stroke-width="1.500" /><path d="M2927 270l8-11 8 5-8 12z" fill="#e8602c" stroke="#222" stroke-width="1.500" /><path d="M2935 259l6-3 4 4-2 4z" fill="#fff" stroke="#222" stroke-width="1.500" />
            <g transform="translate(2825 300) scale(.7)" v-html="folder"></g>
            <rect x="2906.500" y="308" width="27" height="26" fill="#f2f4fa" stroke="#111" stroke-width="1.600" /><path d="M2907 310.500h26" stroke="#5a62c8" stroke-width="4" /><path d="M2909 331v-5a11 11 0 0 1 22 0v5z" fill="#4a66dc" />
            <text class="q" x="2920" y="331">?</text>
          </svg>
        </div>
        <div class="pbody">
          <div class="field"></div>
          <div class="auto">
            <svg width="26" height="26"><path d="M1 1h24v24H1z" fill="#fff" stroke="#333" stroke-width="2" /><path d="M5 12l6 6L22 6" fill="none" stroke="#333" stroke-width="1.800" /></svg>
            <span v-fit="101">Auto-U.</span>
          </div>
          <div class="doc">
            <h1>Import</h1>
            <div class="table">
              <div class="th"><div class="h1c"><b v-fit="95">Toolbar</b></div><b>Menu</b></div>
              <div class="td">
                <div class="c1">
                  <svg width="44" height="40"><rect y="2" width="38" height="38" fill="#e0e0e0" /><g transform="translate(-3 1) scale(.7)" v-html="folder"></g><rect x="29" y="3" width="12" height="17" rx="6" fill="#eee" stroke="#222" stroke-width="1.400" /><path d="M35 3q6 1 6 7h-6z" fill="#e00" /><path d="M35 3v8M29 11h12" stroke="#222" /></svg>
                  <a v-fit="37">File</a><a v-fit="103">Standard</a><a v-fit="39">STL</a><a v-fit="61">Tools</a>
                </div>
                <div class="c2">File</div>
              </div>
            </div>
            <div class="para"><span v-for="(l, i) in helpLines" :key="i" v-fit="helpWidths[i]">{{ l }}</span></div>
            <div class="steps">
              <div class="sh"><b v-fit="67">Steps</b></div>
              <div class="li"><span>1.</span><div><em v-fit="69">Select</em><em v-fit="55">a file</em><em v-fit="56">type.</em></div></div>
              <div class="li"><span>2.</span><div><em v-fit="69">Select</em></div></div>
            </div>
          </div>
          <div class="scroll"><svg width="145" height="34"><rect x="34" width="34" height="34" fill="#cbcbcb" /><path d="M29 8.500L15 17.500l14 9M124 8.500l14 9-14 9" fill="none" stroke="#5e5e5e" stroke-width="3.600" /></svg></div>
        </div>
      </aside>
    </main>

    <div class="snaps">
      <div v-for="s in snaps" :key="s.label" class="snap" :style="{ width: s.cell + 'px' }">
        <i :class="{ off: s.off }"></i><span v-fit="s.w" :style="{ marginLeft: s.gap + 'px' }">{{ s.label }}</span>
      </div>
    </div>
    <footer class="status">
      <div v-for="s in status" :key="s.label" :class="{ on: s.on }" :style="{ width: s.w + 'px', paddingLeft: s.pad - 2 + 'px' }"><span v-fit="s.fit">{{ s.label }}</span></div>
    </footer>
  </div>
</template>

<style>
html, body { margin: 0; overflow: hidden; background: #eaebef; }
</style>
<style scoped>
* { box-sizing: border-box; }
.app { width: 2950px; height: 1730px; overflow: hidden; display: flex; flex-direction: column; background: #eaebef; color: #33353a; font: 29px "Open Sans", "Noto Sans", sans-serif; white-space: nowrap; }
.defs { position: absolute; }
span, b, em, a { display: inline-block; font-style: normal; }
.command { height: 21px; margin-left: 6px; background: #fff; flex: none; overflow: hidden; color: #000; font-size: 26px; line-height: 0; padding-left: 1px; }
.command b { line-height: 40px; margin-top: -18px; }
.tabs { flex: none; height: 58px; padding: 5px 0 0 39px; border-bottom: 2px solid #c3cade; display: flex; position: relative; overflow: hidden; }
.tabs::before { content: ""; position: absolute; left: 0; right: 0; top: 3px; height: 1px; background: #d3d8e8; }
.tab { flex: none; line-height: 57px; overflow: hidden; }
.tab-edge { position: absolute; left: 7px; top: 8px; background: linear-gradient(#eaebef, #eaebef) 0 48px no-repeat; z-index: 1; }
.more { position: absolute; right: 0; top: 8px; width: 11px; height: 50px; background: #eaebef; border: 1px solid #bcc5de; border-right: 0; z-index: 2; }
.more svg { display: block; }
.toolbar { flex: none; height: 68px; padding: 1px 0 0 5px; display: flex; }
.flyout { fill: #77797e; stroke: #4b4c50; stroke-width: 1; }
.main { flex: none; height: 1527px; display: flex; }
.left { width: 2792px; flex: none; display: flex; flex-direction: column; }
.work { height: 1470px; flex: none; display: flex; }
.tools { width: 117px; flex: none; overflow: hidden; display: flex; flex-direction: column; }
.grip { height: 3px; width: 108px; margin: 4px 0; flex: none; border: solid #ccd3e6; border-width: 1px 0; }
.tool-grid { display: grid; grid-template-columns: 56px 56px; margin-left: -6px; }
.tool-grid svg, .toolbar svg, .view svg, .panel svg { display: block; flex: none; }
.views { width: 2675px; flex: none; height: 1466px; display: grid; grid-template: 732px 727px / 1338px 1331px; gap: 7px 6px; }
.view { position: relative; background: #9da3aa; overflow: hidden; }
.view::after { content: ""; position: absolute; inset: 0; border: 1px solid #b8c0d4; }
.view path:not([fill]) { fill: none; }
.minor { stroke: #92989f; stroke-width: 1; shape-rendering: crispEdges; }
.major { stroke: #80848c; stroke-width: 1; shape-rendering: crispEdges; }
.minor.thin { stroke: #92989f; stroke-width: 1; shape-rendering: auto; }
.major.pm { stroke: #82868e; stroke-width: 1.5; shape-rendering: auto; }
.ax-g { stroke: #4a9a4a; stroke-width: 2; }
.ax-r { stroke: #964a4a; stroke-width: 2; }
.yl { stroke: #ffee10; stroke-width: 2; }
.r { stroke: #ff1e1e; } .g { stroke: #1eff32; } .b { stroke: #1e1eff; }
.ln { stroke-width: 2; fill: none; }
.dot { stroke-width: 2; stroke-dasharray: 2 6; }
.dot.dense { stroke-dasharray: 4 4; }
.dot.dd { stroke-dasharray: 4 5; }
.hd { fill: none; stroke-width: 2; }
.pl { stroke-width: 1.2; }
.wd { stroke: #fff; stroke-width: 1; stroke-dasharray: 2 10; }
.wc { fill: none; stroke: #fff; stroke-width: 1.2; }
.ctr { fill: #fff; stroke: #000; stroke-width: 2; }
.nss * { vector-effect: non-scaling-stroke; }
.ucs { stroke: #65686c; stroke-width: 1.2; }
.view text { font-size: 28px; fill: #65686c; }
.badge { position: absolute; left: 0; top: 1px; width: 99px; height: 45px; background: #c9ced6; border-radius: 0 0 5px 0; color: #5f6165; font-size: 28px; line-height: 45px; padding-left: 9px; }
.badge i { position: absolute; right: 6px; top: 3px; width: 17px; height: 41px; border-left: 1px solid #6b6d71; }
.badge i::after { content: ""; position: absolute; left: 4px; top: 15px; border: solid transparent; border-width: 8px 6px 0; border-top-color: #5f6165; }
.badge.hot { width: 212px; background: #869eee; color: #303338; padding-left: 14px; }
.badge.hot i { border-color: #303338; } .badge.hot i::after { border-top-color: #222; }
.badge.wide { width: 123px; top: 0; height: 46px; line-height: 46px; padding-left: 12px; }
.panel { flex: 1; min-width: 0; overflow: hidden; padding-left: 8px; }
.panel header { height: 45px; display: flex; line-height: 45px; color: #727478; padding-left: 9px; }
.panel header i { flex: 1; margin: 21px 0 0 8px; height: 3px; border: solid #ccd3e6; border-width: 1px 0; }
.ptabs { height: 150px; }
.q { font: 700 22px "Liberation Serif", serif; fill: #fff; text-anchor: middle; }
.pbody { margin: 0 0 0 3px; height: 1320px; border-left: 1.5px solid #bcc5de; border-bottom: 1px solid #bcc5de; display: flex; flex-direction: column; }
.field { flex: none; height: 57px; margin: 17px 0 0 2px; background: #fff; }
.auto { flex: none; height: 85px; display: flex; align-items: center; padding: 22px 0 0 11px; gap: 4px; }
.auto span { line-height: 60px; }
.doc { height: 1126px; flex: none; overflow: hidden; background: #fff; color: #000; font-size: 26px; padding-left: 10px; }
h1 { margin: 0; font-size: 45px; letter-spacing: -.5px; line-height: 58px; height: 60px; padding: 4px 0 0 0; width: 133px; border-bottom: 2px solid #b8b8b8; }
.table { margin-top: 6px; height: 215px; border: 1.5px solid #ccc; background: #f4f4f4; width: 220px; }
.th { height: 34px; background: #dadada; border-bottom: 1.5px solid #ccc; display: flex; line-height: 36px; padding-left: 5px; }
.h1c { width: 117px; flex: none; }
.td { display: flex; height: 180px; }
.c1 { width: 117px; border-right: 1.5px solid #ccc; padding: 7px 0 0 5px; display: flex; flex-direction: column; align-items: flex-start; }
.c1 a { color: #0a66c8; line-height: 29.3px; }
.c1 svg { margin-bottom: 9.5px; }
.c2 { padding: 5px 0 0 6px; }
.para { display: flex; flex-direction: column; align-items: flex-start; line-height: 29.33px; padding-top: 7px; }
.steps { margin-top: 9px; width: 133px; height: 260px; background: #f4f4f4; border-radius: 6px; padding: 0 9px; }
.sh { line-height: 34px; height: 34px; border-bottom: 1px solid #bbb; }
.li { display: flex; line-height: 35px; padding: 3px 0 0 4px; margin-bottom: -3px; }
.li > span { width: 27px; }
.li em { display: table; }
.scroll { height: 34px; background: #f0f0f0; }
.vtabs { flex: none; height: 57px; padding-left: 114px; position: relative; display: flex; line-height: 50px; }
.vtabs > svg:first-child { position: absolute; left: 114px; top: 0; }
.v1 { margin-left: 25px; }
.v2 { margin-left: 32px; } .v3 { margin-left: 36px; } .v4 { margin-left: 36px; }
.plus { margin: 15px 0 0 40px; }
.snaps { flex: none; height: 38px; padding: 6px 0 0 10px; display: flex; overflow: hidden; font-size: 28px; border-left: 1px solid #ccd3e6; margin-left: 1px; }
.snap { flex: none; display: flex; height: 32px; overflow: hidden; line-height: 41px; }
.snap i { flex: none; width: 26px; height: 26px; margin-top: 6px; background: #fff; border: 2px solid #36383c; }
.snap i.off { background: #dfdfe0; border: 1.5px solid #b4b4b6; }
.status { flex: none; height: 18px; border-top: 2px solid #c3cade; display: flex; line-height: 38px; font-size: 28px; overflow: hidden; }
.status div { flex: none; height: 40px; border-right: 1px solid #bcc5de; }
.status .on { background: #cfd7ec; font-weight: 700; color: #222; }
</style>
